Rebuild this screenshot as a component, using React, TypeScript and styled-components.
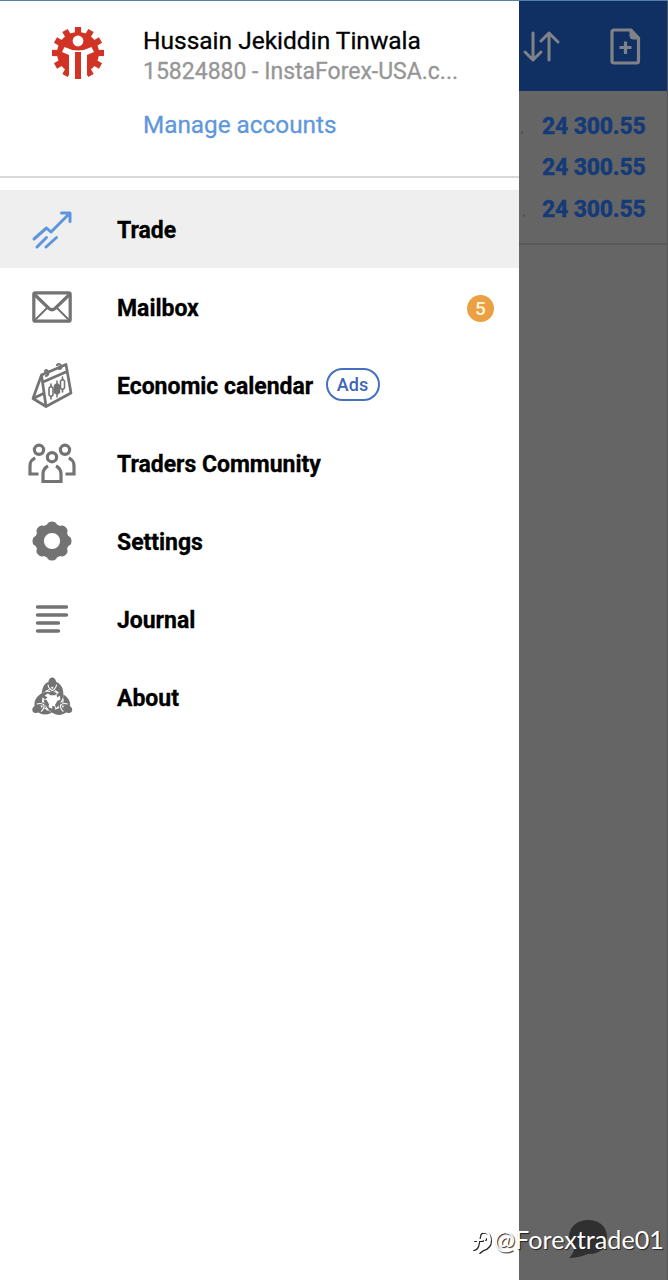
import React from "react";
import styled, { createGlobalStyle } from "styled-components";

const Global = createGlobalStyle`
  *{box-sizing:border-box}
  body{margin:0;background:#656565;font-family:Roboto,sans-serif}
  svg{display:block;overflow:visible}
`;
const Screen = styled.div`
  position:relative;display:flex;width:668px;height:1280px;overflow:hidden;
  border-top:1px solid #547fa8;
`;
const Drawer = styled.aside`width:519px;flex:none;background:#fff;`;
const Account = styled.header`
  display:flex;height:176.5px;border-bottom:2px solid #d9d9d9;padding:24px 0 0 50px;
`;
const Logo = styled.div`width:93px;flex:none;`;
const Name = styled.div`
  padding-top:1px;font-size:24.5px;line-height:30px;color:#000;white-space:nowrap;-webkit-text-stroke:.3px #000;
`;
const Server = styled.div`font-size:23px;line-height:32px;color:#969696;white-space:nowrap;-webkit-text-stroke:.3px #969696;`;
const Manage = styled.a`
  display:block;margin-top:21px;font-size:24.3px;line-height:32px;color:#5f98da;white-space:nowrap;
  -webkit-text-stroke:.3px #5f98da;
`;
const Menu = styled.nav`padding-top:12.6px;`;
const Item = styled.div<{ $active?: boolean }>`
  display:flex;align-items:center;height:77.95px;padding-right:25px;
  background:${p => (p.$active ? "#efefef" : "#fff")};
`;
const IconCell = styled.div`width:104px;flex:none;display:flex;justify-content:center;color:#737373;`;
const Label = styled.span`
  margin-left:13px;padding-top:3px;font-size:23px;font-weight:700;color:#000;white-space:nowrap;
  letter-spacing:-.03px;-webkit-text-stroke:.3px #000;
`;
const Count = styled.span`
  margin-left:auto;margin-top:2px;width:27px;height:27px;border-radius:50%;background:#eaa043;color:#fff6dc;
  font-size:19px;font-weight:500;line-height:28px;text-align:center;
`;
const Ads = styled.span`
  margin-left:12.5px;width:54px;height:33px;border:2px solid #4470bd;border-radius:17px;color:#3d64b5;
  font-size:18px;font-weight:500;line-height:30px;text-align:center;letter-spacing:.1px;
`;
const Behind = styled.main`flex:1;background:#656565;border-right:1px solid #555;`;
const Toolbar = styled.div`display:flex;height:90.4px;background:#102f62;padding:26px 0 0 4px;`;
const PageIcon = styled.div`margin-left:50px;`;
const Totals = styled.div`
  height:154px;padding-top:14.4px;border-bottom:2px solid #595959;
`;
const Total = styled.div`
  position:relative;height:41.5px;line-height:42px;padding-left:23px;font-size:23px;font-weight:800;
  letter-spacing:-.2px;color:#153a78;white-space:nowrap;-webkit-text-stroke:.3px #153a78;
`;
const Dot = styled.i<{ $x: number }>`
  position:absolute;left:${p => p.$x}px;top:25px;width:2px;height:3px;border-radius:1px;background:#535353;
`;
const Chat = styled.div`position:absolute;left:568px;top:1218px;`;
const Watermark = styled.div`
  position:absolute;left:470px;top:1221px;display:flex;color:#fff;font-family:Lato,sans-serif;
  font-size:25.2px;line-height:34px;white-space:nowrap;text-shadow:1px 1px 1px #222;
`;
const Mark = styled.div`width:24px;padding-top:7px;`;

const around = (n: number) => Array.from({ length: n }, (_, i) => (i * 360) / n);

const GearLogo = () => (
  <svg width="56" height="56" viewBox="-28 -28 56 56" fill="#d13424">
    <circle r="21" />
    {around(12).map(a => (
      <rect key={a} x="-3.1" y="-26" width="6.2" height="8" transform={`rotate(${a})`} />
    ))}
    <path d="M-13.5-6Q0 1 13.5-6L16-1 9 2V27H-9V2L-16-1Z" fill="#fff" />
    <rect x="-3" y="-1" width="6" height="27" />
    <circle cy="-12" r="5.4" fill="#fff" />
  </svg>
);
const TradeIcon = () => (
  <svg width="40" height="37" fill="none" stroke="#5d96df" strokeWidth="3" strokeLinecap="round" strokeLinejoin="round">
    <path d="M2 28 14.5 17 19 21 38 2M29.5 2H38V10.5M5 36 14.5 26.5M14 36 24.5 26.5" />
  </svg>
);
const MailIcon = () => (
  <svg width="40" height="32" fill="none" stroke="currentColor" strokeWidth="3.2" strokeLinejoin="round">
    <rect x="1.8" y="1.8" width="36.4" height="28.4" rx="1.5" />
    <path d="M2 3 17 17.5Q20 20 23 17.5L38 3" />
    <path d="M3 29 15 17M37 29 25 17" strokeWidth="2" />
  </svg>
);
const CalendarIcon = () => (
  <svg width="42" height="46" fill="none" stroke="currentColor" strokeWidth="2.7" strokeLinejoin="round" strokeLinecap="round">
    <path d="M10.5 13 35 2.5 40 31 15 44.500ZM10.5 13 2 36.5 15 44.5M3 36 12.5 31.5M12 20 36 9.5" />
    <path d="M14 9q2-2 3 1t-2 4M26 3q3-2 4 1t-2 3" strokeWidth="2.2" />
    <path d="M20 22v3M20 34v3M18 26l2-2 2 2v7l-2 2-2-2ZM31.5 15v3M31.5 27v3M29.5 19l2-2 2 2v7l-2 2-2-2Z" strokeWidth="1.6" />
    <path d="M26 19v16M23.5 23.5l2.5-2 2.5 2v7l-2.5 2-2.5-2Z" fill="currentColor" strokeWidth="1.5" />
  </svg>
);
const CommunityIcon = () => (
  <svg width="48" height="40" fill="none" stroke="currentColor" strokeWidth="3.2">
    <circle cx="11" cy="6.8" r="4.6" /><circle cx="37" cy="6.8" r="4.6" /><circle cx="24" cy="14.2" r="4.6" />
    <path d="M7.2 15C3 17 2 19 2 23V31H10.5M40.8 15C45 17 46 19 46 23V31H37.5M20 23C16 25 15 27 15 31V38.5H33V31C33 27 32 25 28 23" />
  </svg>
);
const SettingsIcon = () => (
  <svg width="40" height="40" viewBox="-20 -20 40 40">
    <circle r="12.5" fill="none" stroke="currentColor" strokeWidth="8.8" />
    {around(8).map(a => (
      <path key={a} d="M-7-14Q-5.5-15.5-4-18Q-3-19.5 0-19.500T4-18Q5.5-15.5 7-14Z" fill="currentColor" transform={`rotate(${a})`} />
    ))}
  </svg>
);
const JournalIcon = () => (
  <svg width="34" height="30" stroke="currentColor" strokeWidth="3.4" strokeLinecap="round">
    <path d="M2.500 3H31.500M2.500 11H31.500M2.500 19H23.500M2.500 27H23.500" />
  </svg>
);
const AboutIcon = () => (
  <svg width="38.5" height="38.5" viewBox="-20 -24 40 40" fill="currentColor">
    {around(3).map(a => (
      <g key={a} transform={`rotate(${a})`}>
        <path d="M-4-19Q-10.5-16-11-7L-7-9Q-4-11 0-8Q4-11 7-7Q9-3 8 3Q13-3 11-11Q9-17 4-19L0-11Z" />
        <path d="M-5-7.5-2-5H3L5-7.5 0-9ZM-9-5-5-3-7-1-10-2Z" />
        <path d="M-4.5-16Q-3.5-11 0-10Q3.5-11 4.5-16M-7-9-3-11M7-7 3-10" fill="none" stroke="#fff" strokeWidth="1.1" />
        <ellipse cy="-18.5" rx="4" ry="5" />
      </g>
    ))}
  </svg>
);

const items = [
  { label: "Trade", icon: <TradeIcon />, active: true },
  { label: "Mailbox", icon: <MailIcon />, count: 5 },
  { label: "Economic calendar", icon: <CalendarIcon />, ads: true },
  { label: "Traders Community", icon: <CommunityIcon /> },
  { label: "Settings", icon: <SettingsIcon /> },
  { label: "Journal", icon: <JournalIcon /> },
  { label: "About", icon: <AboutIcon /> },
];

export default function App() {
  return (
    <Screen>
      <Global />
      <Drawer>
        <Account>
          <Logo><GearLogo /></Logo>
          <div>
            <Name>Hussain Jekiddin Tinwala</Name>
            <Server>15824880 - InstaForex-USA.c...</Server>
            <Manage>Manage accounts</Manage>
          </div>
        </Account>
        <Menu>
          {items.map(i => (
            <Item key={i.label} $active={i.active}>
              <IconCell>{i.icon}</IconCell>
              <Label>{i.label}</Label>
              {i.count && <Count>{i.count}</Count>}
              {i.ads && <Ads>Ads</Ads>}
            </Item>
          ))}
        </Menu>
      </Drawer>
      <Behind>
        <Toolbar>
          <svg width="37" height="38" fill="none" stroke="#7f8388" strokeWidth="3" strokeLinecap="round" strokeLinejoin="round">
            <path d="M10 6V33M2 25 10 33 18 25M26 33V6M18 14 26 6 35 15" />
          </svg>
          <PageIcon>
            <svg width="31" height="38" fill="none" stroke="#7f8388" strokeWidth="3.2" strokeLinejoin="round">
              <path d="M4 3H21L28.5 11V34Q28.5 36 26.5 36H4Q2 36 2 34V5Q2 3 4 3Z" />
              <path d="M20 3V9Q20 12 23 12H29Z" fill="#7f8388" strokeWidth="1" />
              <path d="M15.5 14.5V27M9.5 20.5H21.5" />
            </svg>
          </PageIcon>
        </Toolbar>
        <Totals>
          <Total><Dot $x={2} />24 300.55</Total>
          <Total>24 300.55</Total>
          <Total><Dot $x={4} />24 300.55</Total>
        </Totals>
      </Behind>
      <Chat>
        <svg width="40" height="42" fill="#303030">
          <path d="M20 1C32 1 39 8 39 18S31 36 20 35Q10 39 1 39Q6 34 6 29Q1 24 1 18C1 8 9 1 20 1Z" />
        </svg>
      </Chat>
      <Watermark>
        <Mark>
          <svg width="22" height="26" fill="none" strokeWidth="2" strokeLinecap="round">
            <path d="M3 20Q7 20 8 13L9 7Q10 2 14 3M4 11H12M15 3Q20 4 20 11T13 20L9 23M15 9v1" stroke="#222" transform="translate(1 1)" />
            <path d="M3 20Q7 20 8 13L9 7Q10 2 14 3M4 11H12M15 3Q20 4 20 11T13 20L9 23M15 9v1" stroke="#fff" />
          </svg>
        </Mark>
        @Forextrade01
      </Watermark>
    </Screen>
  );
}
